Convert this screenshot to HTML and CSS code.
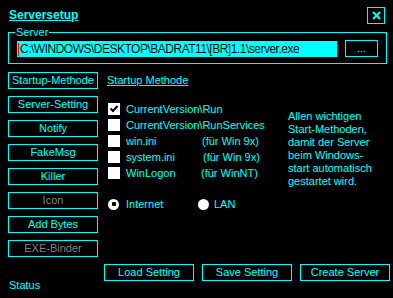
FILE: index.html
```html
<!DOCTYPE html>
<html lang="de">
<head>
    <meta charset="UTF-8">
    <meta name="viewport" content="width=device-width, initial-scale=1.0">
    <title>Serversetup</title>
    <link rel="stylesheet" href="styles.css">
</head>
<body>
    <div class="window">
        <header class="titlebar">
            <h1 class="title">Serversetup</h1>
            <button class="close-btn" title="Schließen">
                <svg width="9" height="9" viewBox="0 0 9 9"><path d="M1 1 L8 8 M8 1 L1 8" stroke="#0ff" stroke-width="2" fill="none"/></svg>
            </button>
        </header>

        <fieldset class="server-box">
            <legend>Server</legend>
            <div class="path-row">
                <div class="path-input"><span class="caret"></span>C:\WINDOWS\DESKTOP\BADRAT11\[BR]1.1\server.exe</div>
                <button class="btn browse-btn">...</button>
            </div>
        </fieldset>

        <div class="main">
            <nav class="side">
                <button class="btn">Startup-Methode</button>
                <button class="btn">Server-Setting</button>
                <button class="btn">Notify</button>
                <button class="btn">FakeMsg</button>
                <button class="btn">Killer</button>
                <button class="btn disabled">Icon</button>
                <button class="btn">Add Bytes</button>
                <button class="btn disabled">EXE-Binder</button>
                <div class="status">Status</div>
            </nav>

            <section class="content">
                <a class="section-link">Startup Methode</a>

                <div class="startup">
                    <ul class="options">
                        <li class="option">
                            <span class="check">
                                <svg width="12" height="12" viewBox="0 0 12 12"><path d="M2.5 5.5 L5 8 L9.5 3" stroke="#000" stroke-width="2" fill="none"/></svg>
                            </span>
                            <span>CurrentVersion\Run</span>
                        </li>
                        <li class="option">
                            <span class="check"></span>
                            <span>CurrentVersion\RunServices</span>
                        </li>
                        <li class="option">
                            <span class="check"></span>
                            <span class="opt-name">win.ini</span>
                            <span>(für Win 9x)</span>
                        </li>
                        <li class="option">
                            <span class="check"></span>
                            <span class="opt-name">system.ini</span>
                            <span class="opt-note">(für Win 9x)</span>
                        </li>
                        <li class="option">
                            <span class="check"></span>
                            <span class="opt-name">WinLogon</span>
                            <span class="opt-note narrow">(für WinNT)</span>
                        </li>
                    </ul>
                    <p class="hint">Allen wichtigen<br>Start-Methoden,<br>damit der Server<br>beim Windows-<br>start automatisch<br>gestartet wird.</p>
                </div>

                <div class="conn">
                    <span class="radio selected"></span>
                    <span class="conn-label">Internet</span>
                    <span class="radio"></span>
                    <span>LAN</span>
                </div>

                <div class="actions">
                    <button class="btn">Load Setting</button>
                    <button class="btn">Save Setting</button>
                    <button class="btn create-btn">Create Server</button>
                </div>
            </section>
        </div>
    </div>
</body>
</html>
```

FILE: styles.css
```css
* {
    margin: 0;
    padding: 0;
    box-sizing: border-box;
}

body {
    width: 393px;
    height: 298px;
    overflow: hidden;
    background: #000;
    color: #0ff;
    font-family: "Liberation Sans", Arial, sans-serif;
    font-size: 11px;
}

.window {
    height: 298px;
    padding: 7px 8px 6px;
    display: flex;
    flex-direction: column;
}

.titlebar {
    display: flex;
    justify-content: space-between;
    align-items: flex-start;
    height: 17px;
}

.title {
    margin-left: 1px;
    font-size: 12px;
    font-weight: bold;
    line-height: 17px;
    text-decoration: underline;
}

.close-btn {
    width: 18px;
    height: 17px;
    border: 1px solid #0ff;
    background: #000;
    display: flex;
    justify-content: center;
    align-items: center;
}

.server-box {
    margin-top: 2px;
    border: 1px solid #0ff;
    padding: 2px 8px 6px;
}

.server-box legend {
    margin-left: -2px;
    padding: 0 1px;
    line-height: 12px;
}

.path-row {
    display: flex;
    align-items: flex-start;
    gap: 8px;
}

.path-input {
    width: 320px;
    height: 16px;
    margin-top: 1px;
    padding-left: 1px;
    display: flex;
    align-items: center;
    background: #0ff;
    color: #000;
    font-size: 12px;
    letter-spacing: -0.5px;
    white-space: nowrap;
    overflow: hidden;
}

.caret {
    width: 1px;
    height: 13px;
    margin-right: 1px;
    background: #f00;
}

.btn {
    height: 17px;
    border: 1px solid #0ff;
    background: #000;
    color: #0ff;
    font: inherit;
    line-height: 14px;
    padding-bottom: 1px;
    text-align: center;
    flex-shrink: 0;
}

.btn.disabled {
    color: #808080;
}

.browse-btn {
    width: 33px;
}

.main {
    flex: 1;
    min-height: 0;
    margin-top: 8px;
    display: flex;
    gap: 9px;
}

.side {
    width: 90px;
    display: flex;
    flex-direction: column;
    gap: 7px;
}

.side .btn {
    width: 100%;
}

.status {
    margin-top: auto;
    padding-left: 1px;
    line-height: 13px;
}

.content {
    flex: 1;
    display: flex;
    flex-direction: column;
}

.section-link {
    align-self: flex-start;
    line-height: 17px;
    text-decoration: underline;
}

.startup {
    display: grid;
    grid-template-columns: 181px 1fr;
    margin-top: 12px;
}

.options {
    list-style: none;
}

.option {
    height: 16px;
    display: flex;
    align-items: center;
    white-space: nowrap;
}

.check {
    width: 12px;
    height: 12px;
    margin: 0 6px 0 1px;
    background: #fff;
    display: flex;
}

.opt-name {
    width: 76px;
}

.opt-note {
    margin-left: 1px;
}

.opt-note.narrow {
    margin-left: -1px;
}

.hint {
    margin-top: 9px;
    line-height: 13px;
}

.conn {
    height: 16px;
    margin-top: 8px;
    display: flex;
    align-items: center;
}

.radio {
    width: 11px;
    height: 11px;
    margin: 0 5px 0 1px;
    border-radius: 50%;
    background: #fff;
    display: flex;
    justify-content: center;
    align-items: center;
}

.radio.selected {
    margin-right: 7px;
}

.radio.selected::after {
    content: '';
    width: 4px;
    height: 4px;
    border-radius: 1px;
    background: #000;
}

.conn-label {
    width: 71px;
}

.actions {
    margin: auto -5px 11px -3px;
    display: flex;
    gap: 8px;
}

.actions .btn {
    width: 90px;
}

.create-btn {
    line-height: 12px;
}
```
